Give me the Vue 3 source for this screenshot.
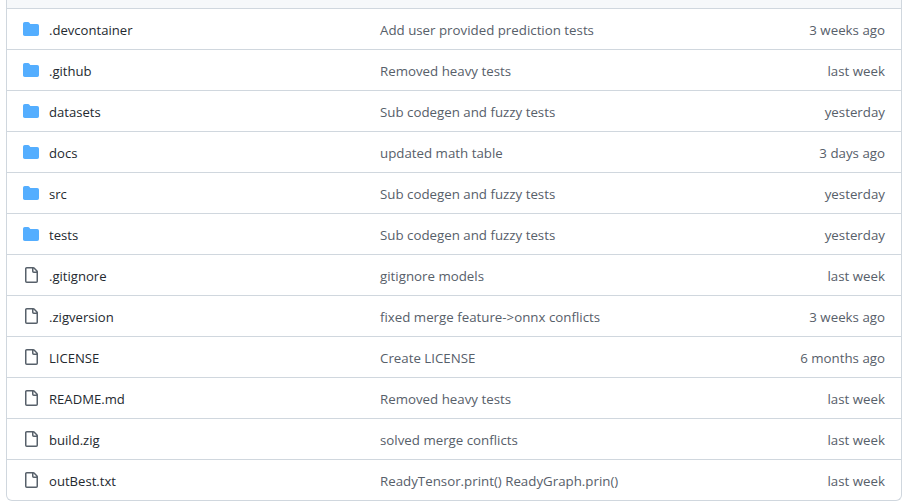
<script setup>
const rows = [
  { name: '.devcontainer', dir: true, msg: 'Add user provided prediction tests', age: '3 weeks ago' },
  { name: '.github', dir: true, msg: 'Removed heavy tests', age: 'last week' },
  { name: 'datasets', dir: true, msg: 'Sub codegen and fuzzy tests', age: 'yesterday' },
  { name: 'docs', dir: true, msg: 'updated math table', age: '3 days ago' },
  { name: 'src', dir: true, msg: 'Sub codegen and fuzzy tests', age: 'yesterday' },
  { name: 'tests', dir: true, msg: 'Sub codegen and fuzzy tests', age: 'yesterday' },
  { name: '.gitignore', dir: false, msg: 'gitignore models', age: 'last week' },
  { name: '.zigversion', dir: false, msg: 'fixed merge feature->onnx conflicts', age: '3 weeks ago' },
  { name: 'LICENSE', dir: false, msg: 'Create LICENSE', age: '6 months ago' },
  { name: 'README.md', dir: false, msg: 'Removed heavy tests', age: 'last week' },
  { name: 'build.zig', dir: false, msg: 'solved merge conflicts', age: 'last week' },
  { name: 'outBest.txt', dir: false, msg: 'ReadyTensor.print() ReadyGraph.prin()', age: 'last week' },
]
</script>

<template>
  <div class="page">
    <div class="box">
      <div class="strip"></div>
      <div v-for="r in rows" :key="r.name" class="row">
        <svg v-if="r.dir" class="icon dir" viewBox="0 0 16 16" width="16" height="16">
          <path d="M1.75 1A1.75 1.75 0 0 0 0 2.75v10.5C0 14.216.784 15 1.75 15h12.5A1.75 1.75 0 0 0 16 13.25v-8.5A1.75 1.75 0 0 0 14.25 3H7.5a.25.25 0 0 1-.2-.1l-.9-1.2C6.07 1.26 5.55 1 5 1H1.75Z" />
        </svg>
        <svg v-else class="icon file" viewBox="0 0 16 16" width="16" height="16">
          <path d="M2 1.75C2 .784 2.784 0 3.75 0h6.586c.464 0 .909.184 1.237.513l2.914 2.914c.329.328.513.773.513 1.237v9.586A1.75 1.75 0 0 1 13.25 16h-9.5A1.75 1.75 0 0 1 2 14.25Zm1.75-.25a.25.25 0 0 0-.25.25v12.5c0 .138.112.25.25.25h9.5a.25.25 0 0 0 .25-.25V6h-2.75A1.75 1.75 0 0 1 9 4.25V1.5Zm6.75.062V4.25c0 .138.112.25.25.25h2.688l-.011-.013-2.914-2.914-.013-.011Z" />
        </svg>
        <span class="name">{{ r.name }}</span>
        <span class="msg">{{ r.msg }}</span>
        <span class="age">{{ r.age }}</span>
      </div>
    </div>
  </div>
</template>

<style scoped>
.page {
  width: 907px;
  height: 503px;
  padding: 0 5px 2px 6px;
  box-sizing: border-box;
  background: #fff;
  font-family: "Open Sans", "Noto Sans", sans-serif;
  font-size: 13.2px;
}
.box {
  border: 1px solid #d0d7de;
  border-top: 0;
  border-radius: 0 0 6px 6px;
  overflow: hidden;
}
.strip {
  height: 8px;
  background: #f6f8fa;
}
.row {
  display: grid;
  grid-template-columns: 16px 321px 1fr auto;
  align-items: center;
  column-gap: 10px;
  height: 40px;
  padding: 0 16px 0 16px;
  border-top: 1px solid #d0d7de;
}
.icon { display: block; }
.dir { fill: #54aeff; }
.file { fill: #57606a; }
.name, .msg, .age { padding-top: 2px; }
.name { color: #24292f; font-size: 13.1px; }
.msg, .age { color: #57606a; font-size: 13.3px; }
.age { text-align: right; }
</style>
